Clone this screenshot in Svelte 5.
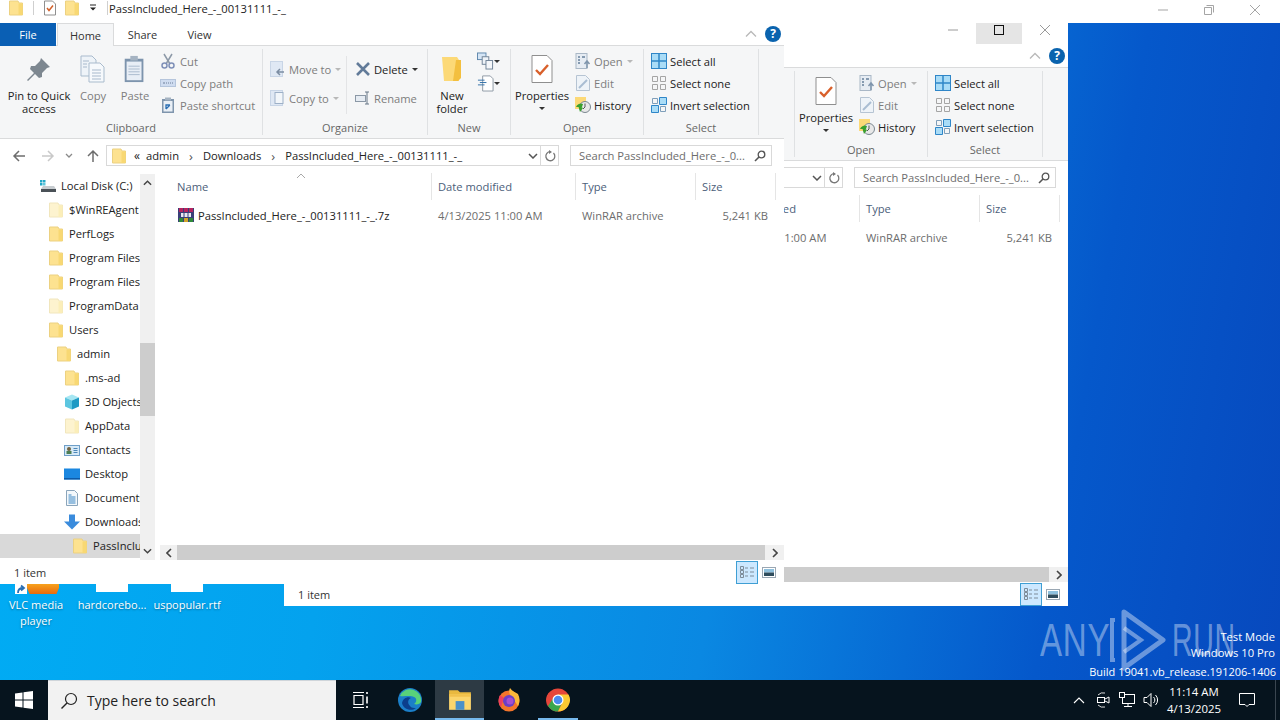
<script>
  const tree = [
    { label: "Local Disk (C:)", level: 0, icon: "disk" },
    { label: "$WinREAgent", level: 1, icon: "pale" },
    { label: "PerfLogs", level: 1, icon: "folder" },
    { label: "Program Files", level: 1, icon: "folder" },
    { label: "Program Files (x86)", level: 1, icon: "folder" },
    { label: "ProgramData", level: 1, icon: "pale" },
    { label: "Users", level: 1, icon: "folder" },
    { label: "admin", level: 2, icon: "folder" },
    { label: ".ms-ad", level: 3, icon: "folder" },
    { label: "3D Objects", level: 3, icon: "cube" },
    { label: "AppData", level: 3, icon: "pale" },
    { label: "Contacts", level: 3, icon: "contacts" },
    { label: "Desktop", level: 3, icon: "desktop" },
    { label: "Documents", level: 3, icon: "docs" },
    { label: "Downloads", level: 3, icon: "down" },
    { label: "PassIncluded_Here_-_00131111_-_", level: 4, icon: "folder", selected: true }
  ];
  const treeIndent = [40, 48, 56, 64, 72];
  const title = "PassIncluded_Here_-_00131111_-_";
</script>

{#snippet folder(pale = false)}
  <svg class="ico16" viewBox="0 0 16 16">
    <path d="M1.500 1h8.500l1 2h3.500v12h-13z" fill={pale ? "#fdf3cf" : "#fde290"} stroke={pale ? "#f1e6bd" : "#ecd181"} />
    <path d="M10.500 3.500v11.500h4v-11.500z" fill={pale ? "#fbeeb9" : "#f8d873"} />
  </svg>
{/snippet}

{#snippet treeIcon(kind)}
  {#if kind === "folder"}
    {@render folder()}
  {:else if kind === "pale"}
    {@render folder(true)}
  {:else if kind === "disk"}
    <svg class="ico16" viewBox="0 0 16 16">
      <rect x="0" y="2" width="2.500" height="2.500" fill="#22a8c8" /><rect x="3" y="2" width="2.500" height="2.500" fill="#22a8c8" />
      <rect x="0" y="5" width="2.500" height="2.500" fill="#22a8c8" /><rect x="3" y="5" width="2.500" height="2.500" fill="#5fc7dc" />
      <path d="M3 8h11l2 3v3H1v-3z" fill="#c7ccd0" /><rect x="1" y="11" width="15" height="3" fill="#4a5157" />
    </svg>
  {:else if kind === "cube"}
    <svg class="ico16" viewBox="0 0 16 16">
      <path d="M8 0.500l7 3-7 3-7-3z" fill="#a6e6f2" /><path d="M1 3.500l7 3v9l-7-3z" fill="#5cc6e0" /><path d="M15 3.500l-7 3v9l7-3z" fill="#1e9ac4" />
    </svg>
  {:else if kind === "contacts"}
    <svg class="ico16" viewBox="0 0 16 16">
      <rect x="0.500" y="3.500" width="15" height="10" fill="#d6e9f7" stroke="#6f9fc8" />
      <circle cx="5" cy="7" r="2" fill="#71613f" /><rect x="2.500" y="9" width="5" height="3" fill="#4d7f55" />
      <path d="M9.500 6.500h4M9.500 8.500h4M9.500 10.500h4" stroke="#4d87b8" />
    </svg>
  {:else if kind === "desktop"}
    <svg class="ico16" viewBox="0 0 16 16"><rect x="0" y="2.500" width="16" height="11" fill="#1b87e0" /><rect x="0" y="12" width="16" height="1.500" fill="#0d5aa8" /></svg>
  {:else if kind === "docs"}
    <svg class="ico16" viewBox="0 0 16 16">
      <path d="M2.500 0.500h8l3 3v12h-11z" fill="#f4f8fb" stroke="#8ba5bb" />
      <path d="M4.500 5h3M4.500 7h7M4.500 9h7M4.500 11h7M4.500 13h7" stroke="#3a86c4" />
    </svg>
  {:else if kind === "down"}
    <svg class="ico16" viewBox="0 0 16 16"><path d="M5 0.500h6v7h5l-8 8-8-8h5z" fill="#3a8bdc" /></svg>
  {/if}
{/snippet}

{#snippet explorer(front)}
  <div class="titlebar">
    {#if front}
      <div class="qat">
        {@render folder()}
        <span class="qat-sep"></span>
        <svg class="ico16" viewBox="0 0 16 16"><path d="M2.500 1h8l3 3v11h-11z" fill="#fff" stroke="#8f8f8f" /><path d="M5 8l2 2.500 4-5" fill="none" stroke="#d2602a" stroke-width="1.500" /></svg>
        {@render folder()}
        <svg class="ico-arrow" viewBox="0 0 10 10"><path d="M2 2h6" stroke="#222" /><path d="M2 4.500h6l-3 3z" fill="#222" /></svg>
        <span class="qat-sep last"></span>
      </div>
      <span class="title-text">{title}</span>
    {:else}
      <div class="controls">
        <span class="ctrl"><svg viewBox="0 0 12 12"><path d="M1 6h10" stroke="#9a9a9a" /></svg></span>
        <span class="ctrl hover"><svg viewBox="0 0 12 12"><rect x="1.500" y="1.500" width="9" height="9" fill="none" stroke="#111" /></svg></span>
        <span class="ctrl"><svg viewBox="0 0 12 12"><path d="M1 1l10 10M11 1L1 11" stroke="#9a9a9a" /></svg></span>
      </div>
    {/if}
  </div>

  <div class="tabs">
    <span class="tab file">File</span>
    <span class="tab home">Home</span>
    <span class="tab">Share</span>
    <span class="tab">View</span>
    <span class="tabs-right">
      <svg class="caret-up" viewBox="0 0 12 8"><path d="M1 6.500l5-5 5 5" fill="none" stroke="#b9b9b9" stroke-width="1.300" /></svg>
      <span class="help">?</span>
    </span>
  </div>

  <div class="ribbon">
    <section class="group clipboard">
      <div class="group-body">
        <div class="big pin">
          <svg class="ico-big" viewBox="0 0 26 26"><path d="M15 2l9 9-3 1-5 5 0 4-3 1-4-4-7 7-1-1 7-7-4-4 1-3h4l5-5z" fill="#7d8790" /></svg>
          <span>Pin to Quick<br />access</span>
        </div>
        <div class="big copy muted">
          <svg class="ico-big" viewBox="0 0 26 28"><path d="M1 1h11l4 4v16H1z" fill="#eef3f8" stroke="#a9bbcd" /><path d="M9 8h11l4 4v15H9z" fill="#f6f9fc" stroke="#a9bbcd" /><path d="M12 15h9M12 18h9M12 21h9M12 24h9M3 6h6M3 9h4M3 12h4" stroke="#a8b9cc" /></svg>
          <span>Copy</span>
        </div>
        <div class="big paste muted">
          <svg class="ico-big" viewBox="0 0 26 30"><rect x="2" y="4" width="20" height="25" fill="#7d94ad" /><rect x="4" y="7" width="16" height="20" fill="#e8eef6" /><rect x="8" y="1" width="8" height="5" fill="#a5b3c2" /><path d="M6 12h12M6 15h12M6 18h12M6 21h12" stroke="#a8b9cc" /></svg>
          <span>Paste</span>
        </div>
        <div class="small-col cutcol muted">
          <div class="small"><svg class="ico16" viewBox="0 0 16 16"><path d="M4 1l6 10M12 1L6 11" stroke="#8d99a8" stroke-width="1.500" /><circle cx="4.500" cy="12.500" r="2.500" fill="none" stroke="#7f90b8" stroke-width="1.500" /><circle cx="11.500" cy="12.500" r="2.500" fill="none" stroke="#7f90b8" stroke-width="1.500" /></svg>Cut</div>
          <div class="small"><svg class="ico16" viewBox="0 0 16 16"><rect x="0.500" y="4.500" width="15" height="7" fill="#cfdcf0" stroke="#b5c5dc" /><path d="M3 8h2M6 8h1M8 8h1M10 8h1M12 8h1" stroke="#6d7f99" /></svg>Copy path</div>
          <div class="small"><svg class="ico16" viewBox="0 0 16 16"><rect x="2" y="2" width="12" height="14" fill="#7f95ad" /><rect x="3.500" y="4" width="9" height="10.500" fill="#e9eff6" /><rect x="5" y="0.500" width="6" height="3" fill="#a5b3c2" /><path d="M6 12V8h4M6 12l4-4" stroke="#2b6fb3" stroke-width="1.300" fill="none" /></svg>Paste shortcut</div>
        </div>
      </div>
      <div class="group-name">Clipboard</div>
    </section>

    <section class="group organize">
      <div class="group-body">
        <div class="small-col movecol muted">
          <div class="small"><svg class="ico16" viewBox="0 0 16 16"><rect x="0.500" y="0.500" width="12" height="15" fill="#dfe8f4" stroke="#c8d5e6" /><path d="M14 11H7M10 8l-3 3 3 3" stroke="#7c8da3" fill="none" stroke-width="1.500" /></svg>Move to<i class="drop grey"></i></div>
          <div class="small"><svg class="ico16" viewBox="0 0 16 16"><rect x="0.500" y="0.500" width="12" height="15" fill="#dfe8f4" stroke="#c8d5e6" /><rect x="5" y="2.500" width="8" height="11" fill="#f2f6fa" stroke="#9db0c7" /></svg>Copy to<i class="drop grey"></i></div>
        </div>
        <span class="vline"></span>
        <div class="small-col delcol">
          <div class="small delete-row"><svg class="ico16" viewBox="0 0 16 16"><path d="M2 2l12 12M14 2L2 14" stroke="#627b99" stroke-width="2.600" /></svg>Delete<i class="drop"></i></div>
          <div class="small muted"><svg class="ico16" viewBox="0 0 16 16"><rect x="0.500" y="5.500" width="10" height="6" fill="#e6ecf3" stroke="#8b98a6" /><path d="M12 2v12M10 2h4M10 14h4" stroke="#667687" /></svg>Rename</div>
        </div>
      </div>
      <div class="group-name">Organize</div>
    </section>

    <section class="group new">
      <div class="group-body">
        <div class="big newfolder">
          <svg class="ico-big" viewBox="0 0 22 28"><path d="M1 2h15l2 3v21H3z" fill="#fcd977" /><path d="M15 5h5v18l-3 3h-5z" fill="#f3bf3f" /></svg>
          <span>New<br />folder</span>
        </div>
        <div class="new-small">
          <div class="newitem"><svg viewBox="0 0 18 18"><rect x="0.500" y="0.500" width="9" height="7" fill="#d5e5f5" stroke="#5d86ac" /><rect x="5.500" y="4.500" width="7" height="8" fill="#eef3f8" stroke="#6f8296" /><rect x="9.500" y="8.500" width="7" height="9" fill="#f5f7fa" stroke="#6f8296" /></svg><i class="drop"></i></div>
          <div class="newitem"><svg viewBox="0 0 18 18"><path d="M6 1.500h8l3 3v13H6z" fill="#fff" stroke="#8c98a4" /><path d="M1 6h7M3 8.500h7M1 11h7" stroke="#2f6fa8" /></svg><i class="drop"></i></div>
        </div>
      </div>
      <div class="group-name">New</div>
    </section>

    <section class="group open">
      <div class="group-body">
        <div class="big props">
          <svg class="ico-big" viewBox="0 0 22 28"><path d="M1 0.500h15l5 5v22H1z" fill="#fff" stroke="#8f8f8f" /><path d="M5 15l4 4 8-9" fill="none" stroke="#d9602b" stroke-width="2.400" /></svg>
          <span>Properties</span>
          <i class="drop under"></i>
        </div>
        <div class="small-col opencol">
          <div class="small muted"><svg class="ico16" viewBox="0 0 16 16"><rect x="1" y="0.500" width="11" height="15" fill="#e6ecf3" stroke="#a9b7c6" /><path d="M3 4h2M3 7h2M3 10h2M7 4h3" stroke="#667f9b" stroke-width="1.500" /><path d="M12 15V9M9.500 11l2.500-3 2.500 3" stroke="#8096ad" fill="none" stroke-width="1.500" /></svg>Open<i class="drop grey"></i></div>
          <div class="small muted"><svg class="ico16" viewBox="0 0 16 16"><path d="M1.500 0.500h9l4 4v11h-13z" fill="#eef3f8" stroke="#b6c4d3" /><path d="M4 13L12 5" stroke="#a9bdd2" stroke-width="2" /></svg>Edit</div>
          <div class="small"><svg class="ico16" viewBox="0 0 16 16"><rect x="0" y="0" width="11" height="12" fill="#fcd977" /><circle cx="10" cy="10" r="5.500" fill="#e8e8e8" stroke="#7a8790" /><path d="M10 6.500V10l-2 2" stroke="#555" fill="none" /><path d="M1 10a5 5 0 0 1 7-3l-1 3z" fill="#3aa02e" /><path d="M3 8l2 7 3-4z" fill="#3aa02e" /></svg>History</div>
        </div>
      </div>
      <div class="group-name">Open</div>
    </section>

    <section class="group select">
      <div class="group-body">
        <div class="small-col selcol">
          <div class="small"><svg class="ico16" viewBox="0 0 16 16"><rect x="0.500" y="0.500" width="15" height="15" fill="#a9dcf7" stroke="#2f86c8" /><path d="M8 0v16M0 8h16" stroke="#2f86c8" stroke-width="1.500" /></svg>Select all</div>
          <div class="small"><svg class="ico16" viewBox="0 0 16 16"><path d="M1.500 1.500h5v5h-5zM9.500 1.500h5v5h-5zM1.500 9.500h5v5h-5zM9.500 9.500h5v5h-5z" fill="none" stroke="#a5a5a5" /></svg>Select none</div>
          <div class="small"><svg class="ico16" viewBox="0 0 16 16"><path d="M1.500 1.500h5v5h-5zM9.500 9.500h5v5h-5z" fill="none" stroke="#7f9fba" /><path d="M8.500 0.500h7v7h-7zM0.500 8.500h7v7h-7z" fill="#a9dcf7" stroke="#2f86c8" /></svg>Invert selection</div>
        </div>
      </div>
      <div class="group-name">Select</div>
    </section>
  </div>

  <div class="addressrow">
    <svg class="nav back" viewBox="0 0 14 14"><path d="M13 7H2M7 2L2 7l5 5" fill="none" stroke="#6d6d6d" stroke-width="1.500" /></svg>
    <svg class="nav fwd" viewBox="0 0 14 14"><path d="M1 7h11M7 2l5 5-5 5" fill="none" stroke="#c9c9c9" stroke-width="1.500" /></svg>
    <svg class="nav recent" viewBox="0 0 8 6"><path d="M1 1l3 3 3-3" fill="none" stroke="#8a8a8a" stroke-width="1.300" /></svg>
    <svg class="nav up" viewBox="0 0 14 14"><path d="M7 13V2M2 7l5-5 5 5" fill="none" stroke="#6d6d6d" stroke-width="1.500" /></svg>
    <div class="address">
      {@render folder()}
      <span class="crumb-more">«</span>
      <span class="crumb">admin</span><span class="crumb-sep">›</span>
      <span class="crumb">Downloads</span><span class="crumb-sep">›</span>
      <span class="crumb">{title}</span>
      <svg class="addr-chev" viewBox="0 0 10 6"><path d="M1 1l4 4 4-4" fill="none" stroke="#555" stroke-width="1.500" /></svg>
      <span class="refresh"><svg viewBox="0 0 12 12"><path d="M9.500 3a4.500 4.500 0 1 1-3-1.300" fill="none" stroke="#777" stroke-width="1.300" /><path d="M5 0v4l3-2z" fill="#777" /></svg></span>
    </div>
    <div class="search">
      <span>Search PassIncluded_Here_-_0...</span>
      <svg viewBox="0 0 12 12"><circle cx="7.500" cy="4.500" r="3.300" fill="none" stroke="#555" stroke-width="1.300" /><path d="M5 7l-4 4" stroke="#555" stroke-width="1.600" /></svg>
    </div>
  </div>

  <div class="content">
    <div class="treepane">
      <div class="tree">
        {#each tree as row}
          <div class="treerow" class:selected={row.selected} style="padding-left: {treeIndent[row.level]}px">
            {@render treeIcon(row.icon)}
            <span>{row.label}</span>
          </div>
        {/each}
      </div>
      <div class="vscroll">
        <svg viewBox="0 0 10 6"><path d="M1 5l4-4 4 4" fill="none" stroke="#444" stroke-width="1.600" /></svg>
        <div class="vtrack"><div class="vthumb"></div></div>
        <svg viewBox="0 0 10 6"><path d="M1 1l4 4 4-4" fill="none" stroke="#444" stroke-width="1.600" /></svg>
      </div>
    </div>
    <div class="listpane">
      <div class="list">
        <svg class="sortcaret" viewBox="0 0 10 6"><path d="M1 5l4-4 4 4" fill="none" stroke="#a8a8a8" /></svg>
        <div class="cols header">
          <span>Name</span><span>Date modified</span><span>Type</span><span>Size</span>
        </div>
        <div class="cols filerow">
          <span class="fname">
            <svg class="ico16" viewBox="0 0 16 16">
              <rect x="0" y="1" width="16" height="14" fill="#3a3f78" />
              <rect x="1" y="1" width="4" height="4" fill="#b5235f" /><rect x="6" y="1" width="4" height="4" fill="#b5235f" /><rect x="11" y="1" width="4" height="4" fill="#b5235f" />
              <rect x="3" y="6" width="10" height="4" fill="#e9e9f2" /><path d="M6 6v4M10 6v4" stroke="#3a3f78" />
              <rect x="1" y="11" width="4" height="4" fill="#2f8a3a" /><rect x="6" y="11" width="4" height="4" fill="#d0a52b" /><rect x="11" y="11" width="4" height="4" fill="#2f8a3a" />
            </svg>
            {title}.7z
          </span>
          <span>4/13/2025 11:00 AM</span>
          <span>WinRAR archive</span>
          <span class="fsize">5,241 KB</span>
        </div>
      </div>
      <div class="hscroll">
        <span class="harrow"><svg viewBox="0 0 6 10"><path d="M5 1L1 5l4 4" fill="none" stroke="#444" stroke-width="1.600" /></svg></span>
        <div class="hthumb"></div>
        <span class="harrow"><svg viewBox="0 0 6 10"><path d="M1 1l4 4-4 4" fill="none" stroke="#444" stroke-width="1.600" /></svg></span>
      </div>
    </div>
  </div>

  <div class="status">
    <span>1 item</span>
    <span class="views">
      <span class="view-details">
        <svg viewBox="0 0 16 14"><path d="M1.500 1.500h3v3h-3zM1.500 5.500h3v3h-3zM1.500 9.500h3v3h-3z" fill="none" stroke="#7e8c99" /><path d="M6 3h3M11 3h4M6 7h3M11 7h4M6 11h3M11 11h4" stroke="#7e8c99" /></svg>
      </span>
      <svg class="view-preview" viewBox="0 0 14 11"><rect x="0.500" y="0.500" width="13" height="10" fill="#fff" stroke="#9aa7b3" /><rect x="2" y="2" width="10" height="3.500" fill="#8ec0dd" /><rect x="2" y="5.500" width="10" height="3.500" fill="#2f4c5c" /></svg>
    </span>
  </div>
{/snippet}

<div class="desktop">
  <div class="backbar">
    <span class="bb"><svg viewBox="0 0 12 12"><path d="M1 6h10" stroke="#a5a5a5" /></svg></span>
    <span class="bb"><svg viewBox="0 0 12 12"><path d="M3.500 1.500h7v7M1.500 3.500h7v7h-7z" fill="none" stroke="#a5a5a5" /></svg></span>
    <span class="bb"><svg viewBox="0 0 12 12"><path d="M1 1l10 10M11 1L1 11" stroke="#a5a5a5" /></svg></span>
  </div>

  <div class="desk-icon vlc">
    <span class="vlc-thumb">
      <svg class="shortcut" viewBox="0 0 12 10"><rect width="12" height="10" fill="#fff" /><path d="M3 9c0-4 2-5 5-5M6 1.500L9 4 6 6.500" fill="none" stroke="#2b6fb3" stroke-width="1.800" /></svg>
      <span class="cone"></span>
    </span>
    <span class="desk-label">VLC media<br />player</span>
  </div>
  <div class="desk-icon hard">
    <span class="thumb"></span>
    <span class="desk-label">hardcorebo...</span>
  </div>
  <div class="desk-icon uspop">
    <span class="thumb"></span>
    <span class="desk-label">uspopular.rtf</span>
  </div>

  <div class="watermark">
    <span class="wm-text any">ANY</span>
    <svg class="wm-logo" viewBox="0 0 60 64">
      <path d="M16 4L55 32 16 60z" fill="none" stroke="rgba(255,255,255,.4)" stroke-width="5" stroke-linejoin="round" />
      <path d="M16 20l17 12-17 12" fill="none" stroke="rgba(255,255,255,.4)" stroke-width="4" />
      <path d="M7 12H4v40h3" fill="none" stroke="rgba(255,255,255,.4)" stroke-width="4" />
    </svg>
    <span class="wm-text run">RUN</span>
  </div>
  <div class="testmode">
    <span>Test Mode</span>
    <span>Windows 10 Pro</span>
    <span class="build">Build 19041.vb_release.191206-1406</span>
  </div>

  <div class="window second">{@render explorer(false)}</div>
  <div class="window first">{@render explorer(true)}</div>

  <div class="taskbar">
    <span class="start">
      <svg viewBox="0 0 18 18"><path d="M0 2.500l7.500-1v7H0zM8.500 1.300L18 0v8.500H8.500zM0 9.500h7.500v7L0 15.500zM8.500 9.500H18V18l-9.500-1.300z" fill="#fff" /></svg>
    </span>
    <div class="tb-search">
      <svg viewBox="0 0 18 18"><circle cx="11" cy="7" r="5.500" fill="none" stroke="#222" stroke-width="1.200" /><path d="M7 11l-5.500 5.500" stroke="#222" stroke-width="1.500" /></svg>
      <span>Type here to search</span>
    </div>
    <span class="tb-btn">
      <svg class="ic-task" viewBox="0 0 16 18"><path d="M1 4.500h9v9H1z" fill="none" stroke="#fff" stroke-width="1.200" /><path d="M0 1.500h11M0 16.500h11" stroke="#fff" stroke-width="1.200" /><path d="M14 1v2M14 5.500v7M14 15v2" stroke="#fff" stroke-width="1.600" /></svg>
    </span>
    <span class="tb-btn wide">
      <svg viewBox="0 0 24 24"><circle cx="12" cy="12" r="12" fill="#1b7fc9" /><path d="M2 8a11 11 0 0 1 21 6c-1 2-4 3-7 2 3-2 3-6 0-7-4-2-10 0-14 -1z" fill="#58d27a" /><path d="M4 15c1-5 6-7 9-5-3 1-4 5-1 8 1 2 4 2 6 2-5 4-13 1-14-5z" fill="#0b3f8c" /></svg>
    </span>
    <span class="tb-btn active">
      <svg viewBox="0 0 22 20"><path d="M1 1h8l2 2h10v3H1z" fill="#e9b93f" /><rect x="1" y="5" width="20" height="14" fill="#fbd56c" /><rect x="7" y="11" width="8" height="8" fill="#4a90c9" /><rect x="1" y="5" width="20" height="2" fill="#f2c14c" /></svg>
    </span>
    <span class="tb-btn">
      <svg viewBox="0 0 24 24"><circle cx="12" cy="13" r="10.500" fill="#f3752b" /><path d="M13 0c2 3 5 4 8 6 2 4 2 8 0 12L15 9c-2-2-4-5-2-9z" fill="#fbb83a" /><path d="M3 7c-2 4-2 9 1 12l3-9z" fill="#ee3f5f" /><circle cx="12" cy="13" r="6" fill="#6a3fc7" /><circle cx="13" cy="13" r="3.500" fill="#a44fd1" /></svg>
    </span>
    <span class="tb-btn open-app">
      <svg viewBox="0 0 24 24"><circle cx="12" cy="12" r="11.500" fill="#e5463a" /><path d="M12 12L2 18.500A11.500 11.500 0 0 1 3 4.500z" fill="#e5463a" /><path d="M12 23.500A11.500 11.500 0 0 1 2 18l6-9 8 6z" fill="#3aa64e" /><path d="M12 6.500h10.500A11.500 11.500 0 0 1 12 23.500l4-8z" fill="#fbc932" /><circle cx="12" cy="12" r="5.500" fill="#fff" /><circle cx="12" cy="12" r="4.300" fill="#4a8bf0" /></svg>
    </span>
    <div class="tray">
      <svg class="tray-caret" viewBox="0 0 12 7"><path d="M1 6l5-5 5 5" fill="none" stroke="#fff" stroke-width="1.100" /></svg>
      <svg class="tray-ic" viewBox="0 0 16 16"><path d="M3 3a7 7 0 0 1 7-2M3 13a7 7 0 0 0 7 2" fill="none" stroke="#ddd" /><rect x="2.500" y="5.500" width="7" height="5" fill="none" stroke="#fff" /><path d="M10 7l4-2v6l-4-2" fill="none" stroke="#fff" /></svg>
      <svg class="tray-ic" viewBox="0 0 16 16"><rect x="3.500" y="2.500" width="12" height="9" fill="none" stroke="#fff" /><rect x="0.500" y="0.500" width="5" height="5" fill="#06141e" stroke="#fff" /><path d="M9 11.500v3M5 14.500h8" stroke="#fff" /></svg>
      <svg class="tray-ic vol" viewBox="0 0 16 16"><path d="M1 5.500h3l4-4v13l-4-4H1z" fill="none" stroke="#fff" /><path d="M10.500 5a4 4 0 0 1 0 6M12.500 3a7 7 0 0 1 0 10" fill="none" stroke="#fff" /></svg>
      <div class="clock"><span>11:14 AM</span><span>4/13/2025</span></div>
      <svg class="notif" viewBox="0 0 16 16"><path d="M0.500 1.500h15v11H10l-2 2-2-2H0.500z" fill="none" stroke="#fff" /></svg>
      <span class="showdesk"></span>
    </div>
  </div>
</div>

<style>
  :global(body) {
    margin: 0;
    overflow: hidden;
  }

  .desktop {
    position: relative;
    width: 1280px;
    height: 720px;
    overflow: hidden;
    background: linear-gradient(100deg, #00aef5 0%, #04a2ee 30%, #0a88e2 58%, #0558cb 82%, #0748bd 100%);
    font-family: "Open Sans", "Noto Sans", sans-serif;
    font-size: 11.2px;
    color: #222;
  }

  .ico16 { width: 16px; height: 16px; flex: none; }

  .backbar {
    position: absolute;
    left: 0;
    top: 0;
    width: 100%;
    height: 23px;
    background: #fff;
    display: flex;
    justify-content: flex-end;
    padding-right: 2px;
    box-sizing: border-box;
  }
  .bb {
    width: 46px;
    display: flex;
    align-items: center;
    justify-content: center;
    padding-bottom: 4px;
    box-sizing: border-box;
  }
  .bb svg { width: 12px; height: 12px; }

  /* windows on the desktop */
  .window {
    position: absolute;
    width: 784px;
    height: 584px;
    background: #fff;
    display: flex;
    flex-direction: column;
    overflow: hidden;
  }
  .first { left: 0; top: 0; }
  .second { left: 284px; top: 22px; }

  .titlebar {
    position: relative;
    height: 23px;
    flex: none;
    display: flex;
    align-items: center;
  }
  .qat {
    display: flex;
    align-items: center;
    padding-left: 8px;
    height: 18px;
    margin-top: -7px;
  }
  .qat .ico16 { margin-right: 6px; }
  .qat-sep { width: 1px; height: 14px; background: #cfcfcf; margin: 0 8px 0 3px; }
  .qat-sep.last { margin-right: 0; }
  .ico-arrow { width: 10px; height: 10px; margin: 0 6px 0 2px; }
  .title-text { font-size: 11.2px; margin-left: 1px; margin-top: -7px; color: #222; }

  .controls {
    position: absolute;
    right: 0;
    top: 0;
    display: flex;
    height: 22px;
  }
  .ctrl {
    width: 46px;
    height: 21px;
    display: flex;
    align-items: center;
    justify-content: center;
    box-sizing: border-box;
    padding-bottom: 7px;
    margin-top: 1px;
  }
  .ctrl svg { width: 12px; height: 12px; }
  .ctrl.hover { background: #e5e5e5; }

  .tabs {
    height: 23px;
    flex: none;
    display: flex;
    align-items: stretch;
    position: relative;
  }
  .tab {
    width: 57px;
    display: flex;
    align-items: center;
    justify-content: center;
    font-size: 11px;
    color: #333;
  }
  .tab.file { width: 56px; background: #0a5fb4; color: #fff; }
  .tab.home {
    background: #f5f6f7;
    border: 1px solid #dadbdc;
    border-bottom: 0;
    box-sizing: border-box;
    margin-left: 1px;
  }
  .tabs-right {
    position: absolute;
    right: 3px;
    top: 3px;
    display: flex;
    align-items: center;
    gap: 8px;
  }
  .caret-up { width: 12px; height: 8px; }
  .help {
    width: 16px;
    height: 16px;
    border-radius: 50%;
    background: #0a63ae;
    color: #fff;
    font-weight: 700;
    font-size: 12px;
    line-height: 16px;
    text-align: center;
  }

  .ribbon {
    height: 92px;
    flex: none;
    background: #f5f6f7;
    border-top: 1px solid #dadbdc;
    border-bottom: 1px solid #dadbdc;
    display: flex;
    margin-top: -1px;
  }
  .group {
    display: flex;
    flex-direction: column;
    border-right: 1px solid #dfe1e3;
    margin: 3px 0;
    box-sizing: border-box;
  }
  .group-body { flex: 1; display: flex; position: relative; min-height: 0; }
  .group-name {
    height: 14px;
    line-height: 14px;
    text-align: center;
    color: #666;
    font-size: 11px;
  }
  .clipboard { width: 263px; }
  .organize { width: 165px; }
  .new { width: 83px; }
  .open { width: 133px; }
  .select { width: 115px; }

  .big {
    display: flex;
    flex-direction: column;
    align-items: center;
    text-align: center;
    line-height: 13px;
    padding-top: 6px;
    box-sizing: border-box;
    white-space: nowrap;
  }
  .big span { margin-top: 6px; }
  .ico-big { height: 28px; width: 26px; flex: none; }
  .pin { width: 78px; }
  .copy { width: 30px; }
  .paste { width: 42px; margin-left: 6px; }
  .muted { color: #7d7d7d; }

  .small-col {
    display: flex;
    flex-direction: column;
    gap: 6px;
    padding-top: 4px;
  }
  .small {
    height: 16px;
    display: flex;
    align-items: center;
    gap: 3px;
    white-space: nowrap;
  }
  .cutcol { margin-left: 4px; }
  .cutcol .small { gap: 4px; }
  .movecol { margin-left: 7px; gap: 13px; padding-top: 12px; width: 76px; }
  .delcol { gap: 13px; padding-top: 12px; margin-left: 8px; }
  .vline { width: 1px; background: #e3e4e6; height: 58px; margin-top: 7px; }

  .drop {
    width: 0;
    height: 0;
    border-left: 3px solid transparent;
    border-right: 3px solid transparent;
    border-top: 3px solid #333;
    margin-left: 1px;
  }
  .drop.grey { border-top-color: #b8b8b8; }
  .drop.under { margin: 0; position: absolute; left: 28px; top: 58px; }

  .newfolder { width: 48px; }
  .new-small { display: flex; flex-direction: column; gap: 4px; padding-top: 3px; margin-left: 1px; }
  .newitem { display: flex; align-items: center; height: 18px; }
  .newitem svg { width: 17px; height: 18px; flex: none; }
  .newitem .drop { margin: 0; }

  .props { width: 62px; }
  .opencol { margin-left: 2px; }
  .selcol { margin-left: 7px; }

  .addressrow {
    height: 33px;
    flex: none;
    display: flex;
    align-items: center;
    position: relative;
    padding-left: 12px;
    box-sizing: border-box;
  }
  .nav { flex: none; }
  .back { width: 14px; height: 14px; }
  .fwd { width: 14px; height: 14px; margin-left: 15px; }
  .recent { width: 8px; height: 6px; margin-left: 10px; }
  .up { width: 14px; height: 14px; margin-left: 13px; }
  .address {
    margin-left: 6px;
    width: 453px;
    height: 21px;
    border: 1px solid #d9d9d9;
    box-sizing: border-box;
    display: flex;
    align-items: center;
    padding-left: 4px;
    position: relative;
    color: #222;
  }
  .crumb-more { margin: 0 6px 0 7px; font-size: 12px; }
  .crumb-sep { margin: 0 10px; color: #555; font-size: 13px; }
  .addr-chev { position: absolute; right: 20px; top: 7px; width: 10px; height: 6px; }
  .refresh {
    position: absolute;
    right: 0;
    top: 0;
    width: 17px;
    height: 19px;
    border-left: 1px solid #d9d9d9;
    display: flex;
    align-items: center;
    justify-content: center;
  }
  .refresh svg { width: 12px; height: 12px; }
  .search {
    margin-left: 11px;
    width: 202px;
    height: 21px;
    border: 1px solid #d9d9d9;
    box-sizing: border-box;
    display: flex;
    align-items: center;
    justify-content: space-between;
    padding: 0 5px 0 8px;
    color: #6d6d6d;
    white-space: nowrap;
  }
  .search svg { width: 12px; height: 12px; }

  .content {
    flex: 1;
    min-height: 0;
    display: flex;
  }
  .treepane {
    width: 155px;
    flex: none;
    display: flex;
    padding-top: 2px;
    box-sizing: border-box;
  }
  .tree { width: 140px; overflow: hidden; }
  .treerow {
    height: 24px;
    display: flex;
    align-items: center;
    gap: 5px;
    white-space: nowrap;
    box-sizing: border-box;
    color: #222;
  }
  .treerow span { margin-bottom: 2px; }
  .treerow.selected { background: #d9d9d9; }
  .vscroll {
    width: 15px;
    background: #f0f0f0;
    display: flex;
    flex-direction: column;
    align-items: center;
  }
  .vscroll > svg { width: 9px; height: 6px; margin: 6px 0; flex: none; }
  .vtrack { flex: 1; width: 100%; padding-top: 151px; box-sizing: border-box; }
  .vthumb { height: 73px; background: #cdcdcd; }

  .listpane {
    flex: 1;
    margin-left: 5px;
    display: flex;
    flex-direction: column;
    min-width: 0;
  }
  .list { flex: 1; position: relative; }
  .sortcaret { position: absolute; left: 136px; top: 1px; width: 10px; height: 6px; }
  .cols {
    display: grid;
    grid-template-columns: 272px 144px 120px 80px;
  }
  .header { height: 28px; color: #4c607a; }
  .header span {
    padding-left: 6px;
    border-right: 1px solid #e5e5e5;
    line-height: 28px;
    height: 27px;
    margin-top: 1px;
  }
  .header span:first-child { padding-left: 17px; }
  .filerow { margin-top: 3px; height: 24px; align-items: center; color: #6d6d6d; }
  .filerow span { padding-left: 6px; white-space: nowrap; }
  .filerow .fname {
    display: flex;
    align-items: center;
    gap: 4px;
    padding-left: 18px;
    color: #222;
  }
  .filerow .fsize { text-align: right; padding-right: 8px; }

  .hscroll {
    height: 15px;
    flex: none;
    background: #f0f0f0;
    display: flex;
  }
  .harrow {
    width: 17px;
    display: flex;
    align-items: center;
    justify-content: center;
    flex: none;
  }
  .harrow:last-child { width: 19px; }
  .harrow svg { width: 6px; height: 10px; }
  .hthumb { flex: 1; background: #cdcdcd; }

  .status {
    height: 24px;
    flex: none;
    display: flex;
    align-items: center;
    justify-content: space-between;
    padding-left: 14px;
    box-sizing: border-box;
    color: #333;
    font-size: 11px;
  }
  .views { display: flex; align-items: center; gap: 4px; padding-right: 8px; }
  .view-details {
    width: 22px;
    height: 23px;
    background: #cce8ff;
    border: 1px solid #3f9fd4;
    box-sizing: border-box;
    display: flex;
    align-items: center;
    justify-content: center;
  }
  .view-details svg { width: 16px; height: 14px; }
  .view-preview { width: 14px; height: 11px; }

  /* desktop icons */
  .desk-icon {
    position: absolute;
    top: 584px;
    width: 76px;
    display: flex;
    flex-direction: column;
    align-items: center;
    color: #fff;
    font-size: 11px;
    line-height: 16px;
    text-align: center;
    text-shadow: 0 1px 2px rgba(0, 0, 0, .35);
  }
  .vlc { left: -2px; }
  .hard { left: 74px; }
  .uspop { left: 149px; }
  .thumb { width: 32px; height: 8px; background: #fff; margin-bottom: 5px; }
  .vlc-thumb {
    width: 44px;
    height: 10px;
    margin-bottom: 3px;
    display: flex;
    margin-left: 2px;
  }
  .shortcut { width: 12px; height: 10px; flex: none; }
  .cone {
    flex: 1;
    background: linear-gradient(#f7a21d, #e86a0d);
    clip-path: polygon(0 0, 100% 0, 100% 40%, 92% 100%, 8% 100%, 0 40%);
  }

  /* watermark */
  .watermark {
    position: absolute;
    left: 1040px;
    top: 606px;
    height: 68px;
    display: flex;
    align-items: center;
    color: rgba(255, 255, 255, .4);
  }
  .wm-text {
    font-family: "Liberation Sans", sans-serif;
    font-size: 46px;
    line-height: 60px;
    display: inline-block;
    transform-origin: left center;
    transform: scaleX(.72);
  }
  .any { width: 68px; letter-spacing: 1px; }
  .run { width: 62px; letter-spacing: 1px; transform: scaleX(.62); }
  .wm-logo { width: 60px; height: 64px; margin-right: 4px; }

  .testmode {
    position: absolute;
    right: 5px;
    top: 629px;
    display: flex;
    flex-direction: column;
    align-items: flex-end;
    color: #fff;
    font-size: 11.2px;
    line-height: 16px;
  }
  .build { margin-top: 3px; font-size: 11px; margin-right: -1px; }

  /* taskbar */
  .taskbar {
    position: absolute;
    left: 0;
    top: 680px;
    width: 100%;
    height: 40px;
    background: #06141e;
    display: flex;
    align-items: stretch;
  }
  .start { width: 48px; display: flex; align-items: center; justify-content: center; }
  .start svg { width: 18px; height: 18px; }
  .tb-search {
    width: 288px;
    background: #f2f2f2;
    border-top: 1px solid #cfd5da;
    box-sizing: border-box;
    display: flex;
    align-items: center;
    padding-left: 12px;
    gap: 9px;
    font-size: 14px;
    color: #222;
  }
  .tb-search svg { width: 18px; height: 18px; }
  .tb-btn {
    width: 49px;
    display: flex;
    align-items: center;
    justify-content: center;
    position: relative;
  }
  .tb-btn.wide { width: 50px; }
  .tb-btn svg { width: 24px; height: 24px; }
  .tb-btn .ic-task { width: 16px; height: 18px; }
  .active { background: #2d3a44; }
  .active::after, .open-app::after {
    content: "";
    position: absolute;
    bottom: 0;
    height: 2px;
    background: #76b9ed;
  }
  .active::after { left: 0; right: 0; }
  .open-app::after { left: 5px; right: 4px; }

  .tray {
    margin-left: auto;
    display: flex;
    align-items: center;
    color: #fff;
  }
  .tray-caret { width: 12px; height: 7px; margin-right: 10px; }
  .tray-ic { width: 16px; height: 16px; margin-right: 8px; }
  .tray-ic.vol { margin-right: 0; }
  .clock {
    display: flex;
    flex-direction: column;
    align-items: center;
    width: 70px;
    font-size: 11.4px;
    line-height: 17px;
  }
  .notif { width: 16px; height: 16px; margin-left: 10px; margin-right: 20px; }
  .showdesk { width: 1px; height: 40px; background: #3a4650; margin-right: 4px; }
</style>
